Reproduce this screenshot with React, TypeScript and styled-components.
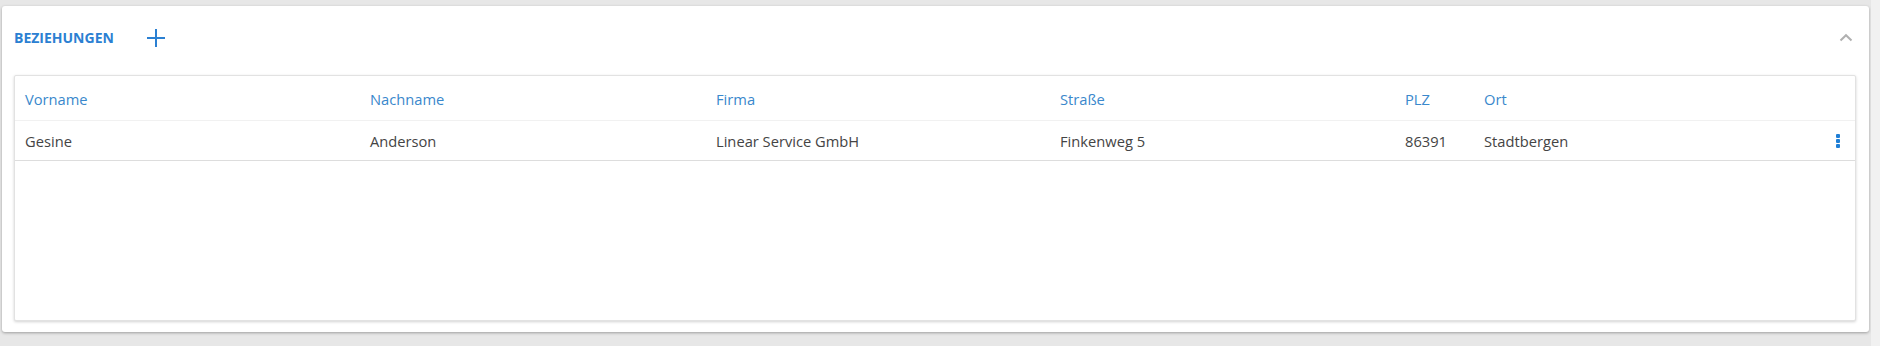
import React from "react";
import styled, { createGlobalStyle } from "styled-components";

const GlobalStyle = createGlobalStyle`
  html, body { margin: 0; padding: 0; }
  body {
    background: #e7e7e7;
    font-family: "Open Sans", "Noto Sans", sans-serif;
    -webkit-font-smoothing: antialiased;
  }
`;

const Page = styled.div`
  display: flex;
  height: 346px;
  width: 1880px;
`;

const Main = styled.div`
  flex: 1;
  padding: 6px 2px 0 2px;
`;

const SideStrip = styled.div`
  width: 9px;
  background: #f1f1f1;
`;

const Panel = styled.section`
  background: #fff;
  border-radius: 3px;
  box-shadow: 0 1px 3px rgba(0, 0, 0, 0.32);
  height: 326px;
  box-sizing: border-box;
  padding: 0 13px 11px 12px;
  display: flex;
  flex-direction: column;
`;

const Header = styled.header`
  display: flex;
  align-items: center;
  height: 63px;
  flex-shrink: 0;
`;

const Title = styled.h2`
  margin: 0;
  font-size: 14px;
  font-weight: 700;
  color: #2b80d2;
  letter-spacing: 0;
`;

const IconButton = styled.button<{ $ml?: number; $mr?: number }>`
  border: 0;
  background: none;
  padding: 0;
  margin-left: ${(p) => p.$ml ?? 0}px;
  margin-right: ${(p) => p.$mr ?? 0}px;
  display: flex;
  align-items: center;
  justify-content: center;
  cursor: pointer;
`;

const Spacer = styled.div`
  flex: 1;
`;

const Card = styled.div`
  margin-top: 6px;
  flex: 1;
  border: 1px solid #e2e2e2;
  border-radius: 2px;
  box-shadow: 0 1px 3px rgba(0, 0, 0, 0.18);
  background: #fff;
`;

const cols = "345px 346px 344px 345px 79px 1fr 40px";

const HeadRow = styled.div`
  display: grid;
  grid-template-columns: ${cols};
  height: 44px;
  align-items: center;
  border-bottom: 1px solid #f1f1f1;
`;

const DataRow = styled.div`
  display: grid;
  grid-template-columns: ${cols};
  height: 39px;
  align-items: center;
  border-bottom: 1px solid #dddddd;
`;

const HeadCell = styled.div`
  padding-left: 10px;
  font-size: 14.7px;
  color: #3a88cc;
  white-space: nowrap;
  padding-top: 1px;
`;

const Cell = styled.div`
  padding-left: 10px;
  font-size: 14.7px;
  color: #444;
  white-space: nowrap;
  padding-top: 1px;
`;

const ActionCell = styled.div`
  display: flex;
  justify-content: flex-end;
  padding-right: 15px;
`;

const PlusIcon = () => (
  <svg width="18" height="18" viewBox="0 0 18 18">
    <path d="M9 0v18M0 9h18" stroke="#2b80d2" strokeWidth="2" fill="none" />
  </svg>
);

const ChevronUp = () => (
  <svg width="14" height="9" viewBox="0 0 14 9">
    <polyline points="1.5,7.5 7,2.2 12.5,7.5" stroke="#b0b0b0" strokeWidth="2" fill="none" />
  </svg>
);

const Kebab = () => (
  <svg width="4" height="14" viewBox="0 0 4 14">
    <rect x="0" y="0" width="4" height="4" rx="1" fill="#1f7fd6" />
    <rect x="0" y="5" width="4" height="4" rx="1" fill="#1f7fd6" />
    <rect x="0" y="10" width="4" height="4" rx="1" fill="#1f7fd6" />
  </svg>
);

const columns = ["Vorname", "Nachname", "Firma", "Straße", "PLZ", "Ort"];
const rows = [["Gesine", "Anderson", "Linear Service GmbH", "Finkenweg 5", "86391", "Stadtbergen"]];

export default function App() {
  return (
    <>
      <GlobalStyle />
      <Page>
        <Main>
          <Panel>
            <Header>
              <Title>BEZIEHUNGEN</Title>
              <IconButton $ml={33} aria-label="Hinzufügen">
                <PlusIcon />
              </IconButton>
              <Spacer />
              <IconButton $mr={3} aria-label="Einklappen">
                <ChevronUp />
              </IconButton>
            </Header>
            <Card>
              <HeadRow>
                {columns.map((c) => (
                  <HeadCell key={c}>{c}</HeadCell>
                ))}
                <div />
              </HeadRow>
              {rows.map((r, i) => (
                <DataRow key={i}>
                  {r.map((v, j) => (
                    <Cell key={j}>{v}</Cell>
                  ))}
                  <ActionCell>
                    <Kebab />
                  </ActionCell>
                </DataRow>
              ))}
            </Card>
          </Panel>
        </Main>
        <SideStrip />
      </Page>
    </>
  );
}
